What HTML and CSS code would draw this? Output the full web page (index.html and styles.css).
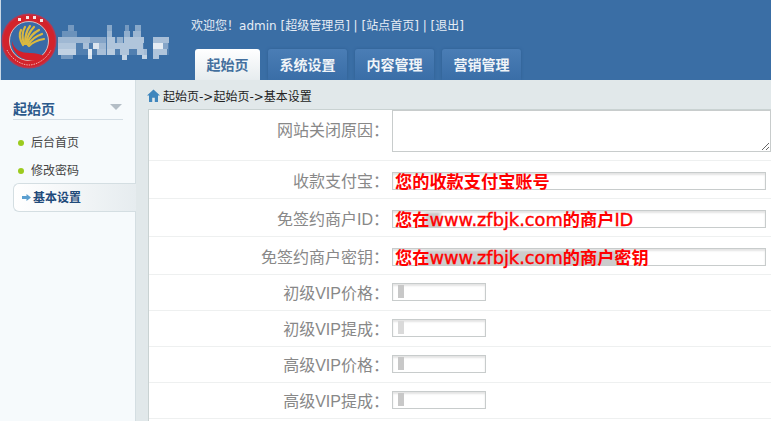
FILE: index.html
```html
<!DOCTYPE html>
<html lang="zh-CN">
<head>
<meta charset="utf-8">
<title>基本设置</title>
<link rel="stylesheet" href="styles.css">
</head>
<body>
<header class="top">
  <div class="brand">
    <svg class="logo" width="58" height="58" viewBox="0 0 58 58">
      <circle cx="28" cy="28" r="27.500" fill="#b8354f"/>
      <circle cx="28" cy="28" r="26" fill="#d3232b"/>
      <circle cx="28" cy="28" r="19.500" fill="#3a6aa6"/>
      <circle cx="28" cy="28" r="19.500" fill="none" stroke="#efe0d4" stroke-width=".8"/>
      <g fill="none" stroke="#dcb93f" stroke-width="2.200" stroke-linecap="round">
        <path d="M22 32C19 27 18 21 20 17"/>
        <path d="M23 31C21 25 21 19 24 14"/>
        <path d="M24 31C24 24 25 18 29 13"/>
        <path d="M25 31C26 24 29 18 33 14"/>
        <path d="M26 31C28 25 32 20 38 17"/>
        <path d="M27 32C30 27 35 23 41 21"/>
        <path d="M28 33C32 29 37 27 43 26"/>
      </g>
      <path d="M11 28C13 37 20 40 29 40C35 40 40 41 44 44C37 49 25 49 18 43C13 39 11 34 11 28Z" fill="#d4202a"/>
      <g fill="#f5e6e6">
        <rect x="17" y="5" width="3" height="3"/><rect x="25" y="3" width="3" height="3"/><rect x="32" y="3" width="3" height="3"/><rect x="39" y="6" width="3" height="3"/>
      </g>
      <path d="M6 37C11 47 21 52 28 52C35 52 45 47 50 37" fill="none" stroke="#eeb0b0" stroke-width="1" stroke-dasharray="1.500 1"/>
    </svg>
    <svg class="mosaic" width="116" height="38" viewBox="0 0 116 38" fill="#fff">
      <rect x="1" y="12" width="86" height="18" opacity=".12"/><rect x="96" y="12" width="16" height="18" opacity=".12"/>
      <rect x="11" y="0" width="6" height="6" opacity=".3"/><rect x="50" y="0" width="5" height="6" opacity=".4"/><rect x="68" y="0" width="4" height="6" opacity=".3"/><rect x="78" y="0" width="6" height="6" opacity=".4"/>
      <rect x="5" y="6" width="15" height="6" opacity=".25"/><rect x="50" y="6" width="5" height="6" opacity=".5"/><rect x="67" y="6" width="6" height="6" opacity=".45"/><rect x="76" y="6" width="8" height="6" opacity=".5"/>
      <rect x="1" y="12" width="32" height="6" opacity=".45"/><rect x="33" y="12" width="16" height="6" opacity=".3"/><rect x="50" y="12" width="8" height="6" opacity=".55"/><rect x="60" y="12" width="6" height="6" opacity=".4"/><rect x="67" y="12" width="20" height="6" opacity=".55"/><rect x="96" y="12" width="16" height="6" opacity=".5"/>
      <rect x="1" y="18" width="18" height="6" opacity=".55"/><rect x="26" y="18" width="6" height="6" opacity=".5"/><rect x="36" y="18" width="6" height="6" opacity=".8"/><rect x="42" y="18" width="7" height="6" opacity=".45"/><rect x="50" y="18" width="36" height="6" opacity=".55"/><rect x="96" y="18" width="10" height="6" opacity=".85"/><rect x="106" y="18" width="5" height="6" opacity=".3"/>
      <rect x="1" y="24" width="18" height="6" opacity=".65"/><rect x="31" y="24" width="4" height="6" opacity=".85"/><rect x="40" y="24" width="9" height="6" opacity=".5"/><rect x="50" y="24" width="8" height="6" opacity=".6"/><rect x="63" y="24" width="9" height="6" opacity=".55"/><rect x="80" y="24" width="10" height="6" opacity=".55"/><rect x="96" y="24" width="14" height="6" opacity=".55"/>
      <rect x="4" y="30" width="12" height="4" opacity=".3"/><rect x="31" y="30" width="4" height="4" opacity=".8"/><rect x="65" y="30" width="5" height="5" opacity=".7"/><rect x="85" y="30" width="5" height="4" opacity=".7"/><rect x="96" y="30" width="6" height="4" opacity=".6"/>
    </svg>
  </div>
  <div class="head-right">
    <p class="welcome">欢迎您<span class="cjk-c">！</span>admin [超级管理员] | [站点首页] | [退出]</p>
    <nav class="tabs">
      <a class="tab tab-active">起始页</a>
      <a class="tab">系统设置</a>
      <a class="tab">内容管理</a>
      <a class="tab">营销管理</a>
    </nav>
  </div>
</header>
<div class="main">
  <aside class="side">
    <div class="side-head"><span>起始页</span><i class="caret"></i></div>
    <ul class="side-list">
      <li class="side-item">后台首页</li>
      <li class="side-item">修改密码</li>
      <li class="side-item side-active">
        <svg class="arrow" width="9" height="7" viewBox="0 0 9 7"><path d="M0 2H4.500V0L9 3.500L4.500 7V5H0Z" fill="#5a9fd0"/></svg>基本设置
      </li>
    </ul>
  </aside>
  <div class="panel">
    <div class="crumb">
      <svg class="home" width="13" height="13" viewBox="0 0 13 13"><path d="M6.500 0.500L13 6.500H11V13H7.800V8.800H5.200V13H2V6.500H0Z" fill="#3f86bd"/></svg>
      <span>起始页-&gt;起始页-&gt;基本设置</span>
    </div>
    <form class="form">
      <div class="row row-area">
        <label class="lbl lbl-area">网站关闭原因<span class="cjk-c">：</span></label>
        <textarea class="area"></textarea>
      </div>
      <div class="row row-wide">
        <label class="lbl">收款支付宝<span class="cjk-c">：</span></label>
        <div class="field field-wide"><span class="note">您的收款支付宝账号</span></div>
      </div>
      <div class="row row-wide">
        <label class="lbl">免签约商户ID<span class="cjk-c">：</span></label>
        <div class="field field-wide smudge-a"><span class="note">您在<span class="latin">www.zfbjk.com</span>的商户<span class="latin">ID</span></span></div>
      </div>
      <div class="row row-wide">
        <label class="lbl">免签约商户密钥<span class="cjk-c">：</span></label>
        <div class="field field-wide smudge-b"><span class="note">您在<span class="latin">www.zfbjk.com</span>的商户密钥</span></div>
      </div>
      <div class="row">
        <label class="lbl">初级VIP价格<span class="cjk-c">：</span></label>
        <div class="field field-small"><i class="blot"></i></div>
      </div>
      <div class="row">
        <label class="lbl">初级VIP提成<span class="cjk-c">：</span></label>
        <div class="field field-small"><i class="blot blot-pale"></i></div>
      </div>
      <div class="row">
        <label class="lbl">高级VIP价格<span class="cjk-c">：</span></label>
        <div class="field field-small"><i class="blot"></i></div>
      </div>
      <div class="row">
        <label class="lbl">高级VIP提成<span class="cjk-c">：</span></label>
        <div class="field field-small"><i class="blot"></i></div>
      </div>
    </form>
  </div>
</div>
</body>
</html>
```
FILE: styles.css
```css
* { box-sizing: border-box; }
html, body { margin: 0; padding: 0; height: 100%; overflow: hidden; }
body {
  background: #fff;
  color: #333;
  font-family: "Liberation Sans", "Noto Sans CJK SC", sans-serif;
  font-size: 12px;
}
.cjk-c { font-family: "Noto Sans CJK TC", sans-serif; }

/* header */
.top {
  display: flex;
  height: 80px;
  background: #3a6ea5;
  border-left: 1px solid #c9d8e6;
}
.brand { display: flex; width: 189px; padding-top: 13px; }
.logo { flex: none; }
.mosaic { flex: none; margin: 12px 0 0 -2px; }
.head-right { display: flex; flex-direction: column; flex: 1; }
.welcome {
  margin: 0;
  height: 49px;
  padding: 16px 0 0 1px;
  line-height: 17px;
  color: #e6edf5;
  font-family: "DejaVu Sans", "Noto Sans CJK SC", sans-serif;
  white-space: nowrap;
}
.tabs { display: flex; gap: 8px; padding-left: 5px; }
.tab {
  display: block;
  height: 31px;
  width: 79px;
  border-radius: 3px 3px 0 0;
  background: linear-gradient(#4a7db5, #3a6ea7);
  box-shadow: 0 0 3px #2f5f92;
  color: #f0f4f8;
  font-size: 14px;
  font-weight: bold;
  line-height: 32px;
  text-align: center;
}
.tab-active {
  width: 65px;
  background: linear-gradient(#fff, #e6ecef);
  box-shadow: none;
  color: #44709e;
}

/* layout */
.main { display: flex; height: 341px; }
.side {
  flex: none;
  width: 136px;
  padding: 18px 0 0 13px;
  background: #f6fafc;
  border-right: 1px solid #d4dee2;
}
.side-head {
  display: flex;
  align-items: center;
  justify-content: space-between;
  width: 110px;
  height: 22px;
  padding-right: 1px;
  border-bottom: 1px solid #d3dde4;
  color: #2d5a8c;
  font-size: 14px;
  font-weight: bold;
  line-height: 20px;
}
.caret {
  width: 0;
  height: 0;
  margin-bottom: 3px;
  border-style: solid;
  border-width: 6px 6px 0;
  border-color: #b4bec6 transparent transparent;
}
.side-list { margin: 9px 0 0; padding: 0; list-style: none; }
.side-item {
  position: relative;
  height: 28px;
  padding-left: 18px;
  line-height: 28px;
  color: #444;
}
.side-item::before {
  content: "";
  position: absolute;
  left: 5px;
  top: 11px;
  width: 6px;
  height: 6px;
  border-radius: 50%;
  background: #9ccb1e;
}
.side-active {
  display: flex;
  align-items: center;
  gap: 2px;
  width: 123px;
  height: 29px;
  margin-top: -2px;
  padding-left: 8px;
  border: 1px solid #d4dee2;
  border-right: 0;
  border-radius: 6px 0 0 6px;
  background: linear-gradient(90deg, #fff, #e6ecef);
  color: #1f4a7a;
  font-weight: bold;
}
.side-active::before { display: none; }
.arrow { flex: none; }

.panel {
  display: flex;
  flex-direction: column;
  flex: 1;
  min-width: 0;
  background: #e1e8ea;
  padding-left: 12px;
}
.crumb {
  display: flex;
  align-items: center;
  gap: 3px;
  height: 29px;
  margin-left: -1px;
  padding: 2px 0 0;
  color: #222;
  font-family: "DejaVu Sans", "Noto Sans CJK SC", sans-serif;
  white-space: nowrap;
}
.home { flex: none; margin-top: -1px; }
.form {
  flex: 1;
  background: #fff;
  border-top: 1px solid #c9d2d2;
  border-left: 1px solid #c9d2d2;
}

/* form rows */
.row {
  display: flex;
  align-items: flex-start;
  height: 36px;
  padding-top: 8px;
  border-bottom: 1px solid #eef0f0;
}
.row-wide { height: 38px; padding-top: 11px; }
.row-wide .lbl { margin-top: -1px; margin-bottom: 1px; }
.row-area { height: 51px; padding-top: 0; }
.lbl {
  flex: none;
  width: 240px;
  height: 18px;
  margin-right: 3px;
  color: #888;
  font-size: 16px;
  line-height: 18px;
  text-align: right;
  white-space: nowrap;
}
.lbl-area { height: 38px; line-height: 38px; }
.area {
  display: block;
  width: 379px;
  height: 42px;
  margin: 0;
  padding: 0;
  border: 1px solid #c8cccc;
  background: #fff;
}
.field {
  height: 18px;
  padding-left: 2px;
  border: 1px solid #c8cccc;
  background: #fff;
  box-shadow: inset 0 2px 2px #e4e4e4;
  white-space: nowrap;
}
.field-wide { width: 374px; }
.field-small { width: 94px; padding-left: 5px; }
.note {
  display: block;
  height: 16px;
  color: #f00;
  font-family: "Noto Sans CJK SC", sans-serif;
  font-size: 17.200px;
  font-weight: bold;
  line-height: 16px;
}
.latin {
  font-family: "DejaVu Sans", sans-serif;
  font-size: 17.800px;
  font-weight: normal;
  -webkit-text-stroke: 0.4px #f00;
}
.smudge-a { background: linear-gradient(90deg, #fff 30px, #ccc 34px, #ccc 45px, #fff 50px); }
.smudge-b { background: linear-gradient(90deg, #fff 30px, #ccc 34px, #ccc 225px, #fff 235px); }
.blot { display: block; width: 6px; height: 13px; margin-top: 1px; background: #c8c8c8; }
.blot-pale { background: #dadada; }
```
